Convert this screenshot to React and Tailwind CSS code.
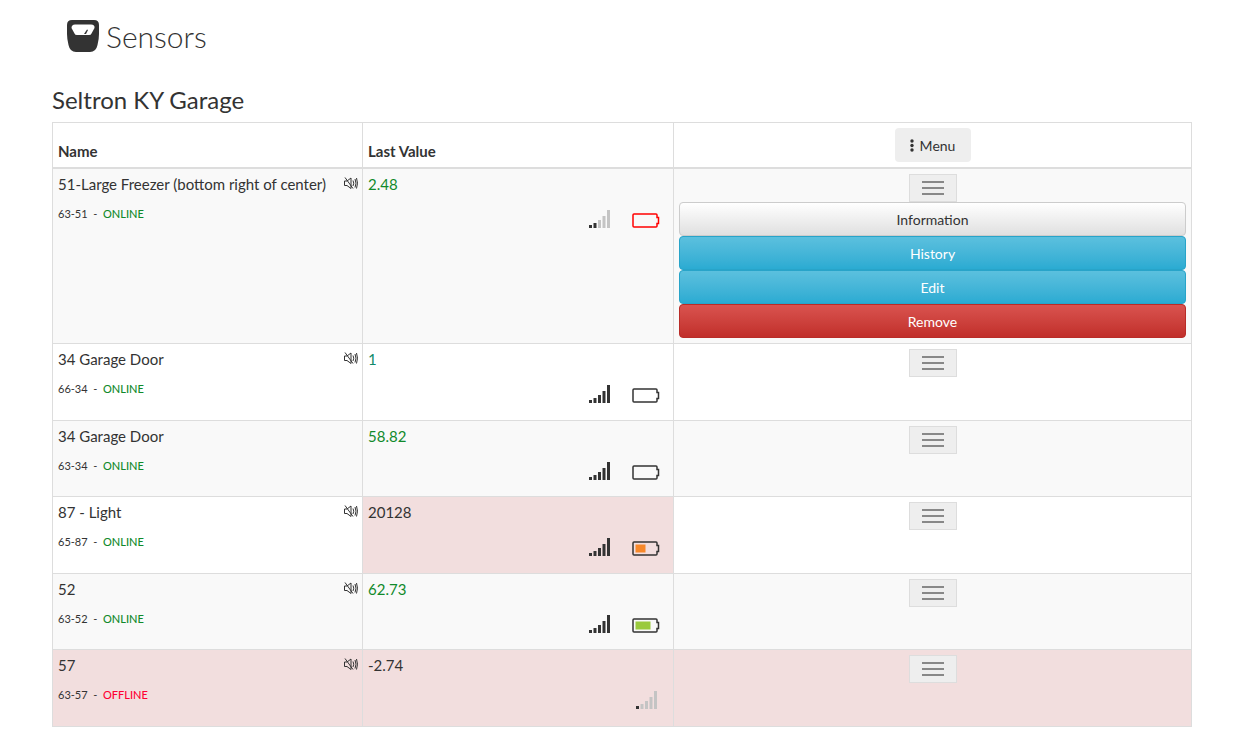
const rows = [
  { name: "51-Large Freezer (bottom right of center)", id: "63-51", value: "2.48", valueColor: "text-[#118a2b]", signal: 2, battery: "red", muted: true, open: true, striped: true },
  { name: "34 Garage Door", id: "66-34", value: "1", valueColor: "text-[#0e8a6a]", signal: 5, battery: "empty", muted: true },
  { name: "34 Garage Door", id: "63-34", value: "58.82", valueColor: "text-[#118a2b]", signal: 5, battery: "empty", striped: true },
  { name: "87 - Light", id: "65-87", value: "20128", valueColor: "text-[#333]", signal: 5, battery: "orange", muted: true, alertValue: true },
  { name: "52", id: "63-52", value: "62.73", valueColor: "text-[#118a2b]", signal: 5, battery: "green", muted: true, striped: true },
  { name: "57", id: "63-57", value: "-2.74", valueColor: "text-[#333]", signal: 1, muted: true, offline: true },
];

function ScaleIcon() {
  return (
    <svg width="32" height="32" viewBox="0 0 32 32" className="shrink-0">
      <path d="M5 0H27Q32 0 32 5V14Q32 19 30.500 25Q29 32 23 32H9Q3 32 1.500 25Q0 19 0 14V5Q0 0 5 0Z" fill="#333" />
      <path d="M4.500 8Q4.500 4.500 8 4.500H24Q28 4.500 27.500 8L24.500 13.500Q24 15 22 15H10Q8 15 7.500 13.500Z" fill="#fff" />
      <path d="M17 14L20 9.500L21 10L19 14Z" fill="#333" />
    </svg>
  );
}

function MuteIcon({ className = "" }) {
  return (
    <svg width="14" height="13" viewBox="0 0 14 13" fill="none" stroke="#333" strokeWidth="1" className={className}>
      <path d="M0.500 4H3L7 1V11.500L3 8.500H0.500Z" />
      <path d="M1 0.500L9 11.500" />
      <path d="M9 3.500Q10.500 6.200 9 9M11 2Q13 6.200 11 10.500M12.500 1Q14.500 6.200 12.500 11.500" />
    </svg>
  );
}

function SignalIcon({ level, className = "" }) {
  const bars = [
    { x: 0, h: 3 },
    { x: 4.500, h: 5 },
    { x: 9, h: 8 },
    { x: 13.500, h: 12 },
    { x: 18, h: 18 },
  ];
  return (
    <svg width="21" height="18" viewBox="0 0 21 18" className={className}>
      {bars.map((bar, i) => (
        <rect key={i} x={bar.x} y={18 - bar.h} width="3" height={bar.h} fill={i < level ? "#333" : "#c4c4c4"} />
      ))}
    </svg>
  );
}

function BatteryIcon({ state }) {
  const stroke = state === "red" ? "#ff0000" : "#333";
  const fill = state === "orange" ? "#f7882a" : state === "green" ? "#9aca3c" : null;
  const fillWidth = state === "orange" ? 10 : 15;
  return (
    <svg width="28" height="15" viewBox="0 0 28 15" className="ml-[22px]">
      <path d="M2 1H24Q25 1 25 2V4.500H26.500V10.500H25V13Q25 14 24 14H2Q1 14 1 13V2Q1 1 2 1Z" fill="none" stroke={stroke} strokeWidth="1.500" />
      {fill && <rect x="3.500" y="3.500" width={fillWidth} height="8" fill={fill} />}
    </svg>
  );
}

function Hamburger() {
  return (
    <button className="mx-auto flex h-[28px] w-[48px] flex-col items-center justify-center gap-[4px] border border-[#dddddd] bg-[#eeeeee]">
      <span className="h-[2px] w-[22px] bg-[#888888]" />
      <span className="h-[2px] w-[22px] bg-[#888888]" />
      <span className="h-[2px] w-[22px] bg-[#888888]" />
    </button>
  );
}

function ActionMenu() {
  return (
    <div className="flex flex-col">
      <button className="h-[34px] rounded-[4px] border border-[#cccccc] bg-gradient-to-b from-[#ffffff] to-[#e0e0e0] text-[14px] text-[#333]">Information</button>
      <button className="h-[34px] rounded-[4px] border border-[#28a4c9] bg-gradient-to-b from-[#5bc0de] to-[#2aabd2] text-[14px] text-white">History</button>
      <button className="h-[34px] rounded-[4px] border border-[#28a4c9] bg-gradient-to-b from-[#5bc0de] to-[#2aabd2] text-[14px] text-white">Edit</button>
      <button className="h-[34px] rounded-[4px] border border-[#b92c28] bg-gradient-to-b from-[#d9534f] to-[#c12e2a] text-[14px] text-white">Remove</button>
    </div>
  );
}

function SensorRow({ row }) {
  const rowBg = row.offline ? "bg-[#f2dede]" : row.striped ? "bg-[#f9f9f9]" : "bg-white";
  return (
    <tr className={rowBg}>
      <td className="h-[76.500px] border border-[#dddddd] p-[5px] align-top">
        <div className="leading-[21px]">
          <span>{row.name}</span>
          {row.muted && <MuteIcon className="float-right mr-[-1px] mt-[3px]" />}
        </div>
        <div className="mt-[13px] text-[11px] leading-[12px]">
          {row.id} &nbsp;-&nbsp;{" "}
          <span className={row.offline ? "font-medium text-[#ff0033]" : "font-medium text-[#118a2b]"}>
            {row.offline ? "OFFLINE" : "ONLINE"}
          </span>
        </div>
      </td>
      <td className={`border border-[#dddddd] p-[5px] align-top ${row.alertValue ? "bg-[#f2dede]" : ""}`}>
        <div className={`leading-[21px] ${row.valueColor}`}>{row.value}</div>
        <div className="mt-[15px] flex items-end justify-end pr-[8px]">
          <SignalIcon level={row.signal} className={row.battery ? "" : "mr-[3px]"} />
          {row.battery && <BatteryIcon state={row.battery} />}
        </div>
      </td>
      <td className="border border-[#dddddd] p-[5px] align-top">
        <Hamburger />
        {row.open && <ActionMenu />}
      </td>
    </tr>
  );
}

export default function App() {
  return (
    <div className="min-h-[752px] bg-white pt-[20px] pl-[52px] font-['Lato','Liberation_Sans',sans-serif] text-[15px] text-[#333]">
      <div className="flex h-[32px] items-center gap-[7px] pl-[15px]">
        <ScaleIcon />
        <h1 className="text-[30px] leading-[32px] font-light">Sensors</h1>
      </div>
      <h2 className="mt-[34px] text-[24px] leading-[28px]">Seltron KY Garage</h2>
      <table className="mt-[8px] w-[1140px] table-fixed border-collapse">
        <colgroup>
          <col className="w-[310px]" />
          <col className="w-[311px]" />
          <col />
        </colgroup>
        <thead>
          <tr>
            <th className="border border-b-2 border-[#dddddd] p-[5px] text-left align-bottom font-bold">Name</th>
            <th className="border border-b-2 border-[#dddddd] p-[5px] text-left align-bottom font-bold">Last Value</th>
            <th className="border border-b-2 border-[#dddddd] p-[5px] align-bottom font-normal">
              <button className="mx-auto flex h-[34px] w-[76px] items-center justify-center gap-[6px] rounded-[4px] bg-[#eeeeee] text-[14px]">
                <svg width="4" height="13" viewBox="0 0 4 13" fill="#333">
                  <circle cx="2" cy="2" r="1.700" />
                  <circle cx="2" cy="6.500" r="1.700" />
                  <circle cx="2" cy="11" r="1.700" />
                </svg>
                Menu
              </button>
            </th>
          </tr>
        </thead>
        <tbody>
          {rows.map((row) => (
            <SensorRow key={row.id} row={row} />
          ))}
        </tbody>
      </table>
    </div>
  );
}
